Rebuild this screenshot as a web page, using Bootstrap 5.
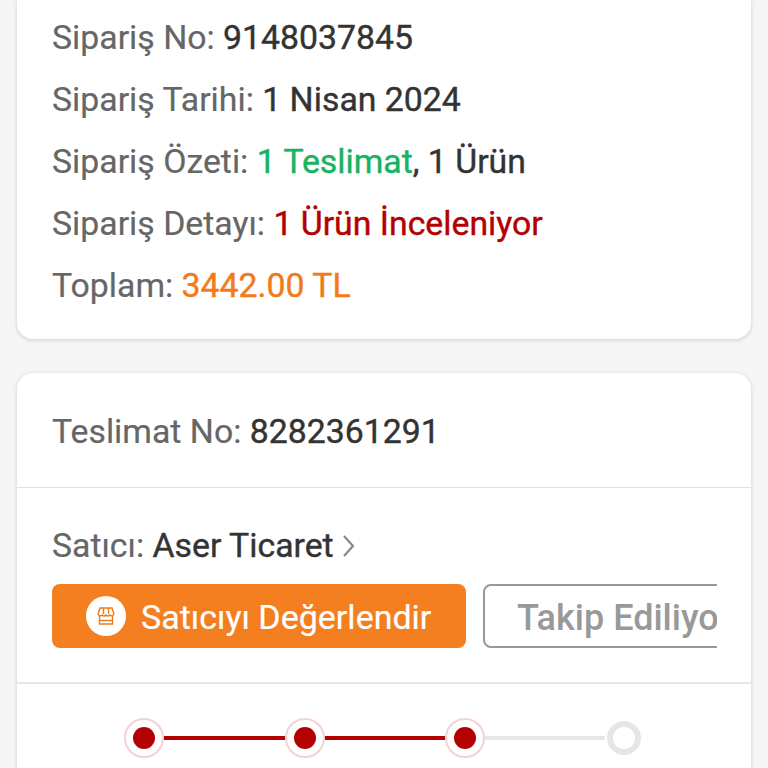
<!DOCTYPE html>
<html lang="tr">
  <head>
    <meta charset="UTF-8" />
    <title>Sipariş Detayı</title>
    <link rel="stylesheet" href="https://cdn.jsdelivr.net/npm/bootstrap@5.3.3/dist/css/bootstrap.min.css" />
    <style>
      html, body { height: 768px; overflow: hidden; }
      body { background: #f5f5f5; font-family: Roboto, "Liberation Sans", sans-serif; color: #333; }
      .order-page { padding: 0 17px; }
      .panel-box { background: #fff; box-shadow: 0 1px 4px rgba(0,0,0,.16); border-radius: 16px; }
      .panel-top { border-radius: 0 0 16px 16px; padding: 7px 35px 22px; margin-bottom: 34px; }
      .panel-bottom { height: 395px; border-radius: 16px 16px 0 0; }
      .info-row { height: 62px; line-height: 62px; font-size: 33.8px; white-space: nowrap; color: #333; -webkit-text-stroke: .4px; }
      .info-key { color: #666; -webkit-text-stroke: .2px; }
      .txt-green { color: #17b45f; }
      .txt-red { color: #b30000; }
      .txt-orange { color: #f27a1a; }
      .delivery-head { height: 115px; padding: 3px 35px 0; border-bottom: 1px solid #e2e2e2; }
      .seller-block { height: 196px; padding: 35px 35px 0; border-bottom: 2px solid #e6e6e6; }
      .seller-line { height: 46px; line-height: 46px; margin-bottom: 15px; }
      .btn-strip { overflow: hidden; width: 665px; gap: 17px; }
      .btn-rate, .btn-follow { height: 64px; flex: none; border-radius: 8px; white-space: nowrap; }
      .btn-rate { width: 414px; background: #f47f20; color: #fff; gap: 15px; padding-left: 34px; font-size: 34px; -webkit-text-stroke: .2px; }
      .btn-rate-label { padding-top: 2px; }
      .btn-follow { width: 270px; border: 2px solid #999; color: #999; font-size: 36px; font-weight: 500; padding: 3px 0 0 32px; }
      .store-disc { width: 40px; height: 40px; border-radius: 50%; background: #fff; }
      .step-track { padding: 34px 0 0 107px; }
      .step-on { width: 40px; height: 40px; border-radius: 50%; border: 2px solid #f3d2d2; background: #fff; flex: none; }
      .step-on i { display: block; width: 22px; height: 22px; border-radius: 50%; background: #b30000; }
      .step-line { width: 121px; height: 4px; background: #b30000; flex: none; }
      .step-line.step-short { width: 120px; }
      .step-line.step-idle { width: 120px; background: #e6e6e6; }
      .step-off { width: 34px; height: 34px; border-radius: 50%; border: 6px solid #e6e6e6; flex: none; margin-left: 2px; }
    </style>
  </head>
  <body>
    <main class="order-page">
      <section class="panel-box panel-top">
        <div class="info-row"><span class="info-key">Sipariş No:</span> 9148037845</div>
        <div class="info-row"><span class="info-key">Sipariş Tarihi:</span> 1 Nisan 2024</div>
        <div class="info-row"><span class="info-key">Sipariş Özeti:</span> <span class="txt-green">1 Teslimat</span>, 1 Ürün</div>
        <div class="info-row"><span class="info-key">Sipariş Detayı:</span> <span class="txt-red">1 Ürün İnceleniyor</span></div>
        <div class="info-row"><span class="info-key">Toplam:</span> <span class="txt-orange">3442.00 TL</span></div>
      </section>

      <section class="panel-box panel-bottom">
        <div class="delivery-head d-flex align-items-center info-row"><span><span class="info-key">Teslimat No:</span> 8282361291</span></div>
        <div class="seller-block">
          <div class="info-row seller-line d-flex align-items-center">
            <span><span class="info-key">Satıcı:</span> Aser Ticaret</span>
            <svg class="ms-2" width="14" height="24" viewBox="0 0 14 24" fill="none" stroke="#888" stroke-width="2.2"><path d="M2 2l9 10-9 10" /></svg>
          </div>
          <div class="d-flex btn-strip">
            <div class="btn-rate d-flex align-items-center">
              <span class="store-disc d-flex align-items-center justify-content-center">
                <svg width="20" height="20" viewBox="0 0 20 20" fill="none" stroke="#f27a1a" stroke-width="1.4"><path d="M4 2h12l2 6a2.400 2.400 0 0 1-4 1 2.600 2.600 0 0 1-4 0 2.600 2.600 0 0 1-4 0 2.400 2.400 0 0 1-4-1zM3.500 10v8h13v-8M7.500 2v6M12.500 2v6M3.500 14.500h13" /></svg>
              </span>
              <span class="btn-rate-label">Satıcıyı Değerlendir</span>
            </div>
            <div class="btn-follow d-flex align-items-center">Takip Ediliyor</div>
          </div>
        </div>
        <div class="step-track d-flex align-items-center">
          <span class="step-on d-flex align-items-center justify-content-center"><i></i></span>
          <span class="step-line"></span>
          <span class="step-on d-flex align-items-center justify-content-center"><i></i></span>
          <span class="step-line step-short"></span>
          <span class="step-on d-flex align-items-center justify-content-center"><i></i></span>
          <span class="step-line step-idle"></span>
          <span class="step-off"></span>
        </div>
      </section>
    </main>
    <script src="https://cdn.jsdelivr.net/npm/bootstrap@5.3.3/dist/js/bootstrap.bundle.min.js"></script>
  </body>
</html>
